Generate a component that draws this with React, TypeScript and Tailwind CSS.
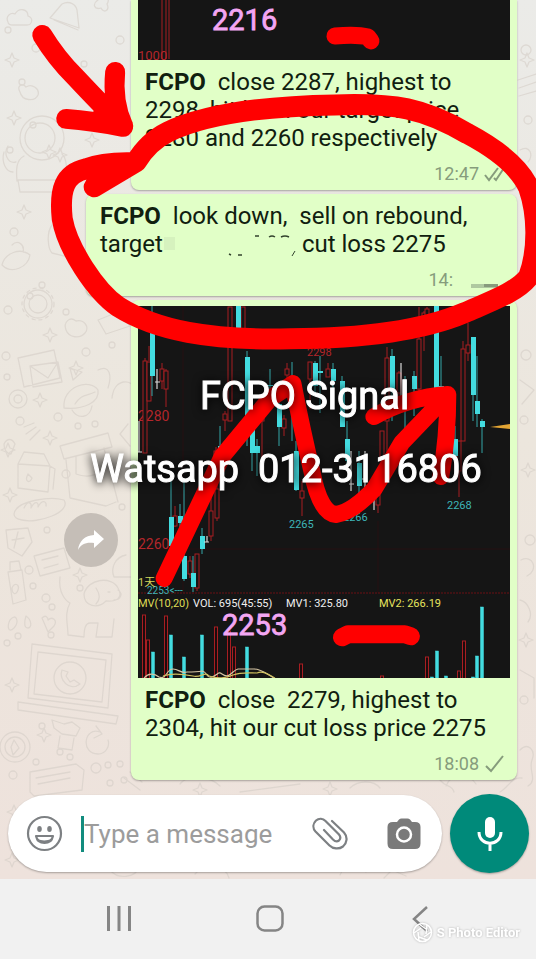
import type { ReactNode } from 'react';

type Candle = [x: number, wickTop: number, wickBottom: number, top: number, bottom: number];

const RED_CANDLES: Candle[] = [
  [145, 357, 452, 360, 452],
  [149, 345, 360, 361, 400],
  [162, 362, 388, 368, 380],
  [166, 368, 406, 370, 388],
  [216, 446, 464, 450, 464],
  [225, 410, 430, 413, 419],
  [230, 306, 420, 306, 420],
  [262, 400, 460, 405, 420],
  [243, 306, 340, 306, 330],
  [287, 362, 378, 368, 374],
  [284, 414, 435, 418, 427],
  [310, 361, 408, 361, 378],
  [328, 362, 375, 368, 376],
  [175, 505, 526, 515, 525],
  [190, 555, 577, 560, 573],
  [197, 553, 590, 553, 587],
  [211, 490, 540, 510, 535],
  [217, 480, 520, 488, 517],
  [302, 480, 515, 490, 497],
  [378, 492, 512, 494, 504],
  [382, 450, 490, 430, 460],
  [387, 346, 460, 357, 420],
  [399, 370, 400, 372, 392],
  [419, 306, 400, 338, 388],
  [424, 310, 350, 312, 316],
  [427, 306, 325, 308, 315],
  [463, 340, 440, 348, 440],
  [468, 322, 360, 344, 352],
  [459, 440, 496, 440, 470],
];

const CYAN_CANDLES: Candle[] = [
  [152, 305, 395, 312, 375],
  [238, 305, 330, 305, 328],
  [247, 350, 445, 356, 420],
  [252, 420, 470, 420, 452],
  [257, 438, 475, 445, 452],
  [220, 425, 455, 445, 448],
  [270, 368, 400, 384, 385],
  [279, 385, 445, 403, 426],
  [292, 361, 440, 405, 410],
  [296, 440, 490, 450, 489],
  [315, 360, 395, 362, 385],
  [320, 355, 412, 370, 372],
  [333, 362, 400, 368, 380],
  [342, 375, 426, 380, 426],
  [347, 420, 470, 438, 460],
  [359, 450, 495, 462, 485],
  [171, 480, 548, 516, 545],
  [180, 503, 530, 515, 522],
  [184, 480, 580, 555, 578],
  [193, 555, 591, 572, 586],
  [202, 527, 553, 535, 548],
  [392, 348, 420, 355, 390],
  [405, 375, 437, 400, 402],
  [414, 370, 415, 375, 388],
  [436, 305, 400, 305, 400],
  [441, 355, 395, 385, 392],
  [455, 425, 460, 438, 455],
  [473, 336, 420, 336, 394],
  [477, 355, 426, 400, 413],
  [482, 418, 452, 420, 426],
];

const VOLUME: [x: number, top: number, cyan: boolean][] = [
  [144, 614, false],
  [148, 639, false],
  [153, 651, true],
  [166, 615, false],
  [171, 634, true],
  [184, 656, true],
  [202, 634, true],
  [216, 626, false],
  [229, 630, false],
  [234, 646, false],
  [247, 646, true],
  [301, 663, false],
  [382, 675, false],
  [427, 656, false],
  [432, 676, true],
  [437, 650, true],
  [446, 675, true],
  [459, 670, false],
  [464, 640, false],
  [473, 676, true],
  [477, 655, true],
  [482, 606, true],
];

const STARS: [number, number][] = [
  [14, 118], [12, 60], [24, 212], [49, 152], [60, 155], [92, 140], [50, 335], [76, 368], [40, 400],
  [10, 495], [8, 450], [50, 438], [80, 575], [12, 685], [44, 735], [14, 812], [12, 860], [527, 60],
  [528, 470], [526, 640], [200, 790], [330, 789],
];

const DOTS: [number, number, number][] = [
  [8, 30, 3], [22, 82, 3], [36, 48, 4], [84, 64, 3], [33, 125, 3], [102, 98, 3], [120, 40, 4], [10, 150, 3],
  [14, 232, 4], [30, 296, 3], [8, 310, 4], [42, 285, 3], [66, 312, 3], [112, 345, 3], [86, 352, 4], [6, 356, 4],
  [20, 421, 4], [58, 417, 4], [66, 474, 4], [78, 426, 3], [95, 424, 3], [7, 377, 3], [122, 507, 3], [47, 530, 3],
  [29, 570, 4], [33, 586, 3], [46, 598, 4], [52, 607, 3], [80, 588, 3], [18, 636, 3], [7, 643, 3], [51, 635, 3],
  [36, 762, 3], [60, 752, 3], [96, 768, 5], [108, 765, 3], [120, 764, 3], [13, 775, 4], [124, 780, 3], [110, 783, 3],
  [42, 726, 3], [70, 757, 3], [526, 50, 5], [528, 120, 4], [526, 355, 5], [524, 420, 4], [530, 540, 5], [524, 700, 4],
];

function Doodles() {
  return (
    <svg
      className="pointer-events-none absolute inset-0 h-full w-full opacity-60"
      viewBox="0 0 536 880"
      preserveAspectRatio="xMinYMin slice"
      fill="none"
      stroke="#d5cec7"
      strokeWidth="1.3"
      strokeLinecap="round"
      strokeLinejoin="round"
      aria-hidden="true"
    >
      {STARS.map(([x, y]) => (
        <path key={`${x}-${y}`} d={`M${x} ${y - 7}l2 5 5 2-5 2-2 5-2-5-5-2 5-2z`} />
      ))}
      {DOTS.map(([x, y, r]) => (
        <circle key={`${x}-${y}`} cx={x} cy={y} r={r} />
      ))}
      {/* clouds, flower and tent */}
      <path d="M8 22c-3-6 3-10 7-8 4-7 13-5 13 2 6 2 4 9-1 9H13c-3 0-5-1-5-3zM50 18l12-14c8-4 14 1 15 6l2 18zM54 20l24 10M98 0c-6 4-4 10 3 8 3 6 9 2 6-4 3-4 0-8-4-7M20 92c-4-7 3-9 6-5 6-4 14 2 12 8-3 7-16 6-18-3z" />
      {/* diver */}
      <circle cx="42" cy="138" r="22" />
      <circle cx="40" cy="138" r="15" />
      <path d="M24 156c-8 4-8 14-7 25M62 154c6 6 5 18 2 30M18 180h44v12H20zM8 146c-5 8 0 18 8 16M4 152c-3 10 2 20 9 20" />
      {/* leaves and crescents */}
      <path d="M2 265c3-12 18-18 28-10-2 12-18 20-28 10zM12 245c6-6 13 0 11 7M52 225c-6 8-4 24 0 28l16 4" />
      <circle cx="38" cy="304" r="14" />
      <circle cx="38" cy="304" r="9" />
      <circle cx="38" cy="304" r="16" strokeDasharray="3 4" />
      <path d="M66 330c-3-8 4-14 10-9 8-2 14 6 9 12-5 6-16 5-19-3zM98 320l20-8 12 14-24 8z" />
      {/* envelopes */}
      <path d="M18 358l36-8 6 28-36 9zM30 366l28-4 4 20-29 5zM30 366l18 12 10-16M70 368l12 4-9 8z" />
      <circle cx="18" cy="399" r="9" />
      <circle cx="18" cy="399" r="4" />
      {/* shell, bag */}
      <path d="M64 408c-2-22 26-30 34-18 2 12-14 20-34 18zM75 404c6-10 12-8 20-12M72 410c6 10 18 8 20-4M98 370c12-6 14 6 10 18M112 398c2-20 20-20 24-8M24 427l10-4M26 434l10-7M30 440l10-10" />
      <path d="M60 446l48-13 4 14-48 12zM66 460l4 38 36 8 10-4M104 448l14 54M76 456v18c10 4 20 2 26-4M128 424l-8 10 10 12" />
      {/* carton and bread */}
      <path d="M18 464l6-12 20 2 6 12-2 26-30-4zM18 464l32 2M50 466l5 3-2 20M28 474c-4 8 2 10 4 4zM14 514c2-14 38-18 50-14 8 12-26 24-42 20-6-1-8-3-8-6zM24 508c4-8 8-6 7 0 4-8 8-6 7-1 4-8 9-6 8-1M6 530l22-2 4 14-10 14-14-8zM12 540l12-2M18 532l-4 16" />
      <path d="M4 444c3-6 8-6 11 0l-4 10c-4 0-7-4-7-10zM34 556l30-8 6 20-30 8zM42 560l16-4M44 568l14-4" />
      {/* bottle */}
      <path d="M8 572l14-2 4 30-13 4zM10 570v-8l9-1 2 9M12 588c2-6 8-4 6 2s-6 4-6-2zM10 620c6-8 10 2 4 8s-7-2-4-8zM26 616c6 4 6 12 2 12s-4-6-2-12zM42 618c4-4 6 0 6 2 4-4 10 0 6 6l-6 6z" />
      {/* dog */}
      <path d="M60 577c-2 16 6 24 10 26-6 10-2 22-2 32l16 2c0-8 2-14 6-14h8l-2 14h16l2-18M84 594c4-16 28-18 34-6 6 10-2 14-12 13-8 8-22 6-22-7zM96 588c4 6 4 12 0 16M108 592h2M118 590c6 4 2 10-4 10" />
      {/* monitor */}
      <path d="M32 644l80 10-4 54-80-10zM38 652l68 8-4 42-68-8zM18 702l100 14-2 8-98-14zM126 555c-10 2-16 12-12 22h18" />
      <circle cx="70" cy="678" r="16" />
      <path d="M62 670c-4 10 8 22 18 14l-6-4-4 2-4-6 2-4z" />
      <circle cx="15" cy="747" r="15" />
      <circle cx="15" cy="747" r="10" />
      <path d="M14 740l5 8-6 7-2-8zM52 720l12 4 8-2 8 6-4 8-14-2-8-6zM60 736l-2 12 14 2 2-12M100 732c-16-6-20 22-2 22 8 0 12-8 10-14M96 726l6 8-8 4M30 772l46-8 8 6-2 20-48 6-4-4zM36 778l34-6M38 784l32-6M124 778l16 12M130 772l12 10" />
      {/* bottom band and right edge */}
      <path d="M110 870c8 10 26 8 30-4M195 874c10-12 30-10 34 4M340 875c4-10 18-14 26-3M384 878l8-8 14 6M180 784c8-10 30-8 40 2M240 792l60-8M350 788c8-8 24-8 30 0M446 786c4-12 22-14 30-2M500 792c8-4 12-16 22-14M518 80l18-6M519 88l17-6M519 96l17-5M520 150c10-6 14 6 8 12M520 380l14 10-12 14M521 560c12-6 18 10 6 16M520 600c8 2 14 14 8 22M520 670l14 8v20M520 750c8-8 16 0 12 10s6 20-4 26M440 780c6 8 12 4 14 12" />
    </svg>
  );
}

function CandleChart() {
  return (
    <svg
      className="block h-[372px] w-full bg-[#151515]"
      viewBox="138 305 372 372"
      preserveAspectRatio="xMidYMid slice"
      fontFamily="Roboto, sans-serif"
      role="img"
      aria-label="FCPO candlestick chart"
    >
      <g stroke="#3a0d10" strokeWidth="1">
        <path d="M138 548h372M183 305v287M378 520v72" strokeOpacity="0.5" />
        <path d="M138 592h372" stroke="#6a1114" strokeDasharray="2 1" />
      </g>
      <text x="138" y="420" fontSize="14" fill="#b3262b">2280</text>
      <text x="138" y="548" fontSize="14" fill="#b3262b">2260</text>
      <text x="307" y="355" fontSize="11" fill="#b3262b">2298</text>
      {RED_CANDLES.map(([x, wickTop, wickBottom, top, bottom]) => (
        <g key={`${x}-${top}`} stroke="#a81e22" fill="#151515">
          <path d={`M${x} ${wickTop}V${wickBottom}`} />
          <rect x={x - 2} y={top} width="4" height={bottom - top} />
        </g>
      ))}
      {CYAN_CANDLES.map(([x, wickTop, wickBottom, top, bottom]) => (
        <g key={`${x}-${top}`} stroke="#35a7a9" fill="#43dce0">
          <path d={`M${x} ${wickTop}V${wickBottom}`} />
          <rect x={x - 2} y={top} width="5" height={bottom - top} stroke="none" />
        </g>
      ))}
      <path
        d="M157 368v20M155 381h5M139 420v31M138 451h4M207 535v6M204 541h5M401 362v35M351 450v40M365 450v38M349 483h5M362 478h5M374 495v14"
        stroke="#d9d9d9"
        strokeWidth="1.2"
      />
      <path d="M490 426l20-3v5z" fill="#e3a534" />
      <text x="289" y="527" fontSize="11" fill="#3eb4b8">2265</text>
      <text x="343" y="520" fontSize="11" fill="#3eb4b8">2266</text>
      <text x="447" y="508" fontSize="11" fill="#3eb4b8">2268</text>
      <text x="147" y="593" fontSize="10" fill="#3eb4b8">2253&lt;---</text>
      <text x="138" y="585" fontSize="11" fill="#d5d45a" fontFamily='Roboto, "Noto Sans CJK SC", sans-serif'>1天</text>
      <g fontSize="11">
        <text x="138" y="606" fill="#dedc55">MV(10,20)</text>
        <text x="193" y="606" fill="#f0f0f0">VOL: 695(45:55)</text>
        <text x="286" y="606" fill="#f0f0f0">MV1: 325.80</text>
        <text x="379" y="606" fill="#e6e45f">MV2: 266.19</text>
      </g>
      {VOLUME.map(([x, top, cyan]) => (
        <rect
          key={x}
          x={x - 1.5}
          y={top}
          width="3"
          height={690 - top}
          fill={cyan ? '#43dce0' : '#1d0b0c'}
          stroke={cyan ? '#43dce0' : '#a81e22'}
          strokeWidth={cyan ? 0.5 : 1}
        />
      ))}
      <g fill="none" strokeWidth="1.2">
        <path d="M144 677c4-5 10-5 15-1 8 3 7-8 14-8 6 0 8 5 14 3 6 0 10 0 15-1 6 1 4 8 10 6s6-6 10-3c8 6 10-4 16-5h16c8 0 14 6 20 9" stroke="#d7c7a5" />
        <path d="M163 675c8-3 20-2 30 0 8 2 12-5 16 0 8 3 18 2 24-1 8-3 16-2 24-2 6-3 12 2 18 5" stroke="#cfc160" />
      </g>
      <text x="222" y="634" fontSize="29" fill="#f3a6f3" stroke="#f3a6f3" strokeWidth="0.8">2253</text>
    </svg>
  );
}

function CroppedChart() {
  return (
    <svg
      className="block h-[60px] w-full bg-[#151515]"
      viewBox="138 0 372 60"
      preserveAspectRatio="xMidYMid slice"
      fontFamily="Roboto, sans-serif"
      role="img"
      aria-label="FCPO volume chart"
    >
      <path d="M162 0v59M166 0v59M169 0v59" stroke="#a81e22" fill="none" />
      <text x="138" y="60" fontSize="13" fill="#b3262b">1000</text>
      <text x="212" y="30" fontSize="29" fill="#f3a6f3" stroke="#f3a6f3" strokeWidth="0.8">2216</text>
    </svg>
  );
}

type BubbleProps = {
  className: string;
  image?: ReactNode;
  meta: ReactNode;
  children: ReactNode;
};

function Bubble({ className, image, meta, children }: BubbleProps) {
  return (
    <article className={`mr-[19px] bg-[#e1ffc7] pb-1.5 shadow-[0_1px_2px_rgba(0,0,0,0.3)] ${className}`}>
      {image && <div className="px-[7px]">{image}</div>}
      <div className="px-3.5 pt-2 text-[24px] leading-7 whitespace-pre text-[#10200f]">{children}</div>
      <div className="mt-3 flex items-center justify-end gap-1 pr-3 text-[18px] leading-5 text-[#869c7c]">{meta}</div>
    </article>
  );
}

function Annotations() {
  return (
    <svg
      className="pointer-events-none absolute inset-0 h-full w-full"
      viewBox="0 0 536 960"
      preserveAspectRatio="xMidYMin meet"
      fill="none"
      stroke="#ff0000"
      strokeLinecap="round"
      strokeLinejoin="round"
      aria-hidden="true"
    >
      <g strokeWidth="20">
        <path d="M42 35Q56 58 75 77Q104 108 123 126M115 72Q112 102 123 126M66 119Q92 121 123 127" />
        <path d="M115 106L123 126L98 113z" fill="#ff0000" strokeWidth="10" />
        <path
          strokeWidth="21"
          d="M94 187L136 162Q148 142 168 132Q220 107 335 105C395 103 424 108 468 134C500 151 520 168 529 188C538 214 539 250 529 277C518 292 490 302 465 313C420 332 360 339 290 339C210 341 156 331 118 307C95 291 67 248 62 219C59 190 64 174 86 169Q104 162 134 163"
        />
        <path d="M335 36Q357 34 368 37L371 41" strokeWidth="17" />
        <path d="M342 638L348 635H405L411 637" strokeWidth="18" />
      </g>
      <path
        d="M164 579L222 457L270 399L293 384Q302 430 312 472Q320 514 336 515Q352 513 374 490L402 443L448 395M374 417Q408 398 448 395Q448 438 441 477"
        strokeWidth="17"
      />
    </svg>
  );
}

function Watermarks() {
  return (
    <svg
      className="pointer-events-none absolute inset-0 h-full w-full overflow-visible drop-shadow-[0_1px_5px_rgba(0,0,0,1)]"
      viewBox="0 0 536 960"
      preserveAspectRatio="xMidYMin meet"
      fontFamily="Roboto, sans-serif"
      fontSize="38"
      fill="#ffffff"
      stroke="#ffffff"
      strokeWidth="1"
    >
      <text x="200" y="409">FCPO Signal</text>
      <text x="90" y="483" className="whitespace-pre">Watsapp  012-3116806</text>
    </svg>
  );
}

function Composer() {
  return (
    <form className="relative flex items-center gap-2 pt-3.5 pr-[7px] pb-1.5 pl-2" onSubmit={(e) => e.preventDefault()}>
      <div className="flex h-[77px] min-w-0 flex-1 items-center rounded-full bg-white pr-[21px] pl-[18px] shadow-[0_1px_2px_rgba(0,0,0,0.3)]">
        <button type="button" aria-label="Emoji" className="shrink-0">
          <svg width="37" height="37" viewBox="0 0 37 37" fill="none" stroke="#7d8083" strokeWidth="2.2">
            <circle cx="18.5" cy="18.5" r="16.5" />
            <ellipse cx="13.5" cy="14" rx="2.3" ry="3" fill="#7d8083" stroke="none" />
            <ellipse cx="23.5" cy="14" rx="2.3" ry="3" fill="#7d8083" stroke="none" />
            <path d="M10 21h17c-1 4.500-4 7-8.500 7S11 25.500 10 21z" strokeLinejoin="round" />
            <path d="M11 25q7 3 15 0" strokeWidth="2" />
          </svg>
        </button>
        <span className="ml-[18px] h-9 w-[3px] shrink-0 bg-[#128c7e]" />
        <input
          type="text"
          aria-label="Message"
          placeholder="Type a message"
          className="min-w-0 flex-1 text-[26px] leading-8 outline-none placeholder:text-[#9c9c9c]"
        />
        <button type="button" aria-label="Attach" className="mr-[39px] shrink-0">
          <svg width="36" height="34" viewBox="0 0 36 34" fill="none" stroke="#7d8083" strokeWidth="2.2" strokeLinecap="round">
            <path d="M20 4L32 15.500C36 20 35 26 31 29.500C27 32.500 21 32 17.500 28.500L3.500 14.500C0 10.500 1.500 6 4 3.500C7 1 11 1.500 13.500 4L27 17.500C29 20 28.500 22 27 23.500C25 25 23 24.500 21 22.500L12 13" />
          </svg>
        </button>
        <button type="button" aria-label="Camera" className="shrink-0">
          <svg width="34" height="32" viewBox="0 0 34 32" fill="#7a7a7a">
            <path d="M10 4l2-2.500Q13 .5 14.500.5h6Q22 .5 23 1.500L25 4h3q5.500 0 5.500 5v16.500q0 5.500-5.500 5.500H6Q.5 31 .5 25.500V9Q.5 4 6 4z" />
            <circle cx="17" cy="16.5" r="7" stroke="#ffffff" strokeWidth="2.5" />
          </svg>
        </button>
      </div>
      <button
        type="button"
        aria-label="Record voice message"
        className="flex size-[79px] shrink-0 items-center justify-center rounded-full bg-[#008a7a] shadow-[0_1px_2px_rgba(0,0,0,0.3)]"
      >
        <svg width="26" height="36" viewBox="0 0 26 36" fill="none" stroke="#ffffff" strokeWidth="3">
          <rect x="8" y="1" width="10" height="21" rx="5" fill="#ffffff" stroke="none" />
          <path d="M2 16c0 15 22 15 22 0M13 27v8" />
        </svg>
      </button>
    </form>
  );
}

function SystemNav() {
  return (
    <nav className="relative flex h-20 items-center justify-around bg-[#f1f1f1] pr-10 pl-11">
      <button type="button" aria-label="Recent apps">
        <svg width="26" height="26" viewBox="0 0 26 26" stroke="#858585" strokeWidth="3">
          <path d="M2.500 0v25M13 0v25M23.500 0v25" />
        </svg>
      </button>
      <button type="button" aria-label="Home">
        <svg width="28" height="28" viewBox="0 0 28 28" fill="none" stroke="#858585" strokeWidth="2.5">
          <rect x="1.5" y="1.5" width="25" height="24" rx="7" />
        </svg>
      </button>
      <button type="button" aria-label="Back">
        <svg width="26" height="26" viewBox="0 0 26 26" fill="none" stroke="#858585" strokeWidth="2.5">
          <path d="M19 1L6 13l13 12" />
        </svg>
      </button>
      <div className="absolute right-4 bottom-4 flex items-center gap-1 text-[13px] leading-5 font-bold text-white drop-shadow-[0_0_1px_rgba(0,0,0,0.25)]">
        <svg width="21" height="21" viewBox="0 0 21 21" fill="none" stroke="#ffffff" strokeWidth="1.5">
          <circle cx="10.5" cy="10.5" r="9" />
          <path d="M7 2l7 5M15 3l-1 9M19 10l-7 5M15 18l-8-3M7 19l-1-9M2 11l7-5" />
        </svg>
        S Photo Editor
      </div>
    </nav>
  );
}

export default function App() {
  return (
    <div className="relative w-full overflow-hidden font-[Roboto,sans-serif]">
      <main className="relative bg-linear-to-b from-[#ebebe8] via-[#ece6dd] to-[#eee2dc]">
        <Doodles />
        <div className="relative flex flex-col gap-1">
          <Bubble
            className="ml-[131px] rounded-b-lg"
            image={<CroppedChart />}
            meta={
              <>
                <time>12:47</time>
                <svg width="22" height="18" viewBox="0 0 22 18" fill="none" stroke="#869c7c" strokeWidth="2">
                  <path d="M2 10l4 5L15 3M11 13l2 2L21 3" />
                </svg>
              </>
            }
          >
            <p><b className="font-bold">FCPO</b>{'  close 2287, highest to'}</p>
            <p>2298, hit both our target price</p>
            <p>2280 and 2260 respectively</p>
          </Bubble>

          <Bubble
            className="ml-[86px] rounded-lg"
            meta={
              <>
                <time>14:</time>
                <svg className="ml-3" width="36" height="18" viewBox="0 0 36 18">
                  <path d="M2 13h27v4H2z" fill="#afc9a0" />
                  <path d="M15 13h14v3H15z" fill="#879b7c" />
                </svg>
              </>
            }
          >
            <p><b className="font-bold">FCPO</b>{'  look down,  sell on rebound,'}</p>
            <p className="flex items-center">
              target
              <svg className="h-7 w-[139px]" viewBox="162 230 139 28" fill="none" stroke="#33432e" aria-hidden="true">
                <path d="M163 237h11v13h-11z" fill="#d6f2be" stroke="none" />
                <path d="M228 254l2 1M237 255h4M254 236h4M268 237q3-2 6 0M280 237q4-2 8 0" strokeWidth="1.5" />
                <path d="M294 251l-3 5" />
              </svg>
              cut loss 2275
            </p>
          </Bubble>

          <div className="relative">
            <Bubble
              className="ml-[131px] rounded-lg pt-1.5"
              image={<CandleChart />}
              meta={
                <>
                  <time>18:08</time>
                  <svg width="22" height="20" viewBox="0 0 22 20" fill="none" stroke="#869c7c" strokeWidth="2">
                    <path d="M3 12l5 5L20 2" />
                  </svg>
                </>
              }
            >
              <p><b className="font-bold">FCPO</b>{'  close  2279, highest to'}</p>
              <p>2304, hit our cut loss price 2275</p>
            </Bubble>
            <button
              type="button"
              aria-label="Forward"
              className="absolute top-[213px] left-16 flex size-[54px] items-center justify-center rounded-full bg-[#c5beb7]"
            >
              <svg width="28" height="22" viewBox="0 0 28 22" fill="#ffffff">
                <path d="M17 1l10 9-10 9v-5C9 13 4 15 1 21C2 12 8 6.500 17 6z" />
              </svg>
            </button>
          </div>
        </div>
        <Composer />
      </main>
      <SystemNav />
      <Annotations />
      <Watermarks />
    </div>
  );
}
